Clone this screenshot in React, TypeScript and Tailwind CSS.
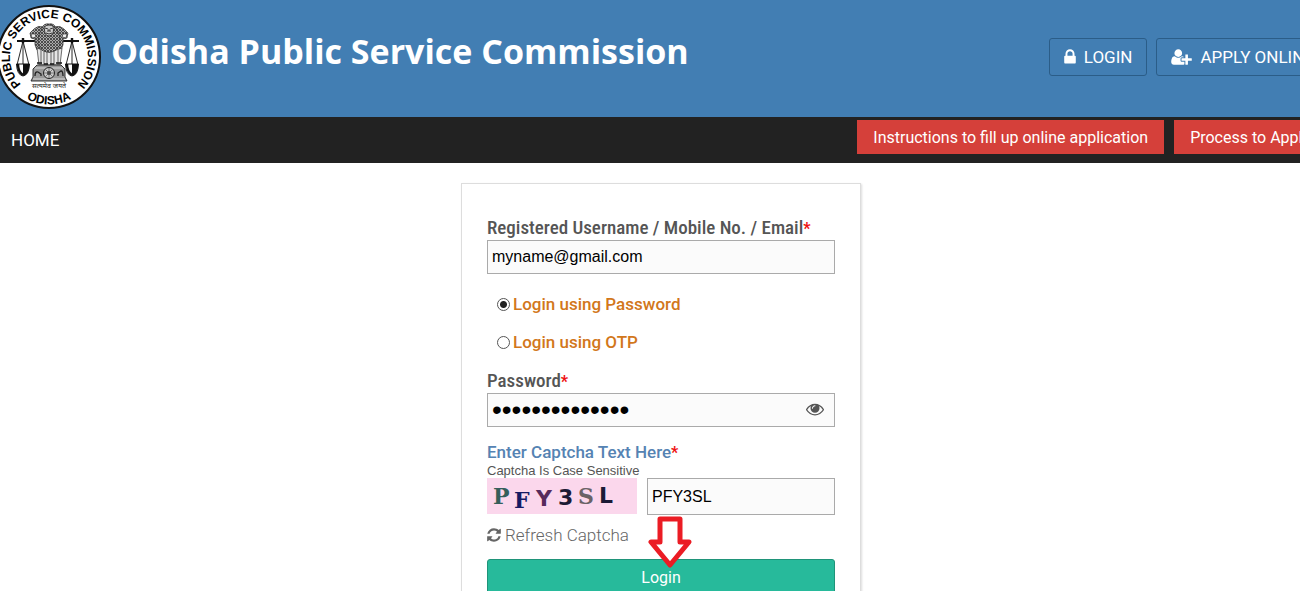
import { useState } from 'react'

const ICONS = {
  lock: {
    box: '0 0 1152 1792',
    d: 'M320 768h512v-192q0-106-75-181t-181-75-181 75-75 181v192zM1152 864v576q0 40-28 68t-68 28h-960q-40 0-68-28t-28-68v-576q0-40 28-68t68-28h32v-192q0-184 132-316t316-132 316 132 132 316v192h32q40 0 68 28t28 68z',
  },
  userPlus: {
    box: '0 0 2048 1792',
    d: 'M704 896q-159 0-271.5-112.5t-112.5-271.5 112.5-271.5 271.5-112.5 271.5 112.5 112.5 271.5-112.5 271.5-271.5 112.5zM1664 1024h352q13 0 22.5 9.5t9.5 22.5v192q0 13-9.5 22.5t-22.5 9.5h-352v352q0 13-9.5 22.5t-22.5 9.5h-192q-13 0-22.5-9.5t-9.5-22.5v-352h-352q-13 0-22.5-9.5t-9.5-22.5v-192q0-13 9.5-22.5t22.5-9.5h352v-352q0-13 9.5-22.5t22.5-9.5h192q13 0 22.5 9.5t9.5 22.5v352zM928 1248q0 52 38 90t90 38h256v238q-68 50-171 50h-874q-121 0-194-69t-73-190q0-53 3.5-103.5t14-109 26.5-108.5 43-97.5 62-81 85.5-53.5 111.5-20q19 0 39 17 79 61 154.5 91.5t164.5 30.5 164.5-30.5 154.5-91.5q20-17 39-17 132 0 217 96h-223q-52 0-90 38t-38 90v192z',
  },
  eye: {
    box: '0 0 1792 1792',
    d: 'M1664 960q-152-236-381-353 61 104 61 225 0 185-131.5 316.5t-316.5 131.5-316.5-131.5-131.5-316.5q0-121 61-225-229 117-381 353 133 205 333.5 326.5t434.5 121.5 434.5-121.5 333.5-326.5zM944 576q0-20-14-34t-34-14q-125 0-214.5 89.5t-89.5 214.5q0 20 14 34t34 14 34-14 14-34q0-86 61-147t147-61q20 0 34-14t14-34zM1792 960q0 34-20 69-140 230-376.5 368.5t-499.5 138.5-499.5-139-376.5-368q-20-35-20-69t20-69q140-229 376.5-368t499.5-139 499.5 139 376.5 368q20 35 20 69z',
  },
  refresh: {
    box: '0 0 1536 1792',
    d: 'M1511 1056q0 5-1 7-64 268-268 434.5t-478 166.5q-146 0-282.5-55t-243.5-157l-129 129q-19 19-45 19t-45-19-19-45v-448q0-26 19-45t45-19h448q26 0 45 19t19 45-19 45l-137 137q71 66 161 102t187 36q134 0 250-65t186-179q11-17 53-117 8-23 30-23h192q13 0 22.5 9.5t9.5 22.5zM1536 256v448q0 26-19 45t-45 19h-448q-26 0-45-19t-19-45 19-45l138-138q-148-137-349-137-134 0-250 65t-186 179q-11 17-53 117-8 23-30 23h-199q-13 0-22.5-9.5t-9.5-22.5v-7q65-268 270-434.5t480-166.5q146 0 284 55.5t245 156.5l130-129q19-19 45-19t45 19 19 45z',
  },
}

function Icon({ name, className }: { name: keyof typeof ICONS; className: string }) {
  return (
    <svg viewBox={ICONS[name].box} fill="currentColor" className={className} aria-hidden="true">
      <path d={ICONS[name].d} />
    </svg>
  )
}

function Scale({ x }: { x: number }) {
  return (
    <g transform={`translate(${x} 0)`}>
      <path d="M0 41L-6 65M0 41L6 65M0 41V65" fill="none" stroke="#111" strokeWidth="0.9" />
      <path d="M-6.5 64H6.5Q6 75 0 76Q-6 75-6.5 64Z" fill="#fff" stroke="#111" strokeWidth="1" />
      <path d="M0 64H6.5Q6 75 0 76Z" fill="#111" />
      <path d="M-5 64Q-5 72 0 75" fill="none" stroke="#111" strokeWidth="2.4" />
    </g>
  )
}

function Seal() {
  return (
    <svg viewBox="-3 5 104 104" className="size-[104px] shrink-0" role="img" aria-label="Odisha Public Service Commission seal">
      <defs>
        <path id="seal-top" d="M24 87A39 39 0 1 1 74 87" />
        <path id="seal-bottom" d="M4 71A47 47 0 0 0 94 71" />
        <pattern id="mane" width="3" height="3" patternUnits="userSpaceOnUse">
          <rect width="3" height="3" fill="#aaa" />
          <path d="M0 0L1.5 1.5L3 0M0 3L1.5 1.5L3 3" fill="none" stroke="#333" strokeWidth="0.8" />
        </pattern>
      </defs>
      <circle cx="49" cy="57" r="51" fill="#fff" stroke="#111" strokeWidth="2" />
      <g fill="#000" fontSize="12" fontFamily="Liberation Sans, Arial, sans-serif" fontWeight="700" textAnchor="middle">
        <text><textPath href="#seal-top" startOffset="50%">PUBLIC SERVICE COMMISSION</textPath></text>
        <text><textPath href="#seal-bottom" startOffset="50%">ODISHA</textPath></text>
      </g>
      <path d="M17 41H79" stroke="#111" strokeWidth="2.2" />
      <path d="M23 38V43M72 38V43" stroke="#111" strokeWidth="2.4" />
      <Scale x={23} />
      <Scale x={72} />

      {/* side lions */}
      <g fill="url(#mane)" stroke="#333" strokeWidth="0.7">
        <path d="M43 27Q38 25 34 29L30 33L31 38L35 39Q34 45 37 50L44 53Z" />
        <path d="M55 27Q60 25 64 29L68 33L67 38L63 39Q64 45 61 50L54 53Z" />
      </g>
      <path d="M31 34L35 34L36 37L32 38ZM67 34L63 34L62 37L66 38Z" fill="#eee" stroke="#222" strokeWidth="0.6" />
      {/* legs */}
      <path d="M37 48L39 65H60L62 48Q49 54 37 48Z" fill="#e6e6e6" stroke="#333" strokeWidth="0.7" />
      <path d="M41 50V65M44 52V65M47 52V65M51 52V65M54 52V65M58 50V65" stroke="#555" strokeWidth="0.9" />
      <path d="M37 63H42M44 64H48M50 64H54M56 63H62" stroke="#111" strokeWidth="1.6" />
      {/* middle lion */}
      <path d="M42 28Q44 23 49 24Q54 23 56 28Q61 36 60 45L55 51Q49 54 43 51L38 45Q37 36 42 28Z" fill="url(#mane)" stroke="#333" strokeWidth="0.7" />
      <path d="M44 27Q49 23 54 27L53 33Q52 36 49 36Q46 36 45 33Z" fill="#ccc" stroke="#222" strokeWidth="0.8" />
      <path d="M45 28L48 29M53 28L50 29M49 29V31M47 31H51M46 33Q49 35 52 33" fill="none" stroke="#222" strokeWidth="0.9" />
      {/* abacus */}
      <path d="M37 65H61L65 69V77L67 81H31L33 77V69Z" fill="#999" stroke="#222" strokeWidth="0.9" />
      <path d="M35 68H63M33 79H65" stroke="#ddd" strokeWidth="0.9" />
      <circle cx="49" cy="73" r="5.5" fill="#ccc" stroke="#222" strokeWidth="1" />
      <path d="M49 68V78M44 73H54M45.5 69.5L52.5 76.5M52.5 69.5L45.5 76.5" stroke="#555" strokeWidth="0.7" />
      <circle cx="49" cy="73" r="2" fill="#444" />
      <path d="M35 76Q35 71 38 72L41 74V76M58 76V73L61 71Q63 71 63 76" fill="none" stroke="#222" strokeWidth="1.3" />
      <text x="49" y="88" fontSize="7" textAnchor="middle" fill="#222" fontFamily="Noto Sans, sans-serif">सत्यमेव जयते</text>
    </svg>
  )
}

function Captcha() {
  return (
    <svg viewBox="0 0 150 36" className="h-9 w-[150px] shrink-0 bg-[#fbd7ec]" role="img" aria-label="Captcha">
      <g fontWeight="700" fontSize="22">
        <g fontFamily="DejaVu Serif, serif">
          <text x="6" y="26" fill="#355f5b">P</text>
          <text x="27" y="30" fill="#161a63">F</text>
          <text x="91" y="26" fill="#6a6266">S</text>
        </g>
        <g fontFamily="DejaVu Sans, sans-serif">
          <text x="49" y="28" fill="#572a5c">Y</text>
          <text x="71" y="27" fill="#1c1a35">3</text>
          <text x="112" y="25" fill="#1a1a35">L</text>
        </g>
      </g>
    </svg>
  )
}

const Required = () => <span className="text-base leading-none font-bold text-[#e11]">*</span>

const fieldClass =
  'w-full rounded-none border border-[#aaa] bg-[#fbfbfb] px-1 font-["Liberation_Sans",Arial,sans-serif] text-black outline-none'

const radioClass =
  'size-[13px] appearance-none rounded-full border border-[#555] bg-white checked:bg-[radial-gradient(circle,#222_3px,white_4px)]'

export default function App() {
  const [method, setMethod] = useState('password')
  const [visible, setVisible] = useState(false)

  return (
    <div className="min-h-screen overflow-x-clip bg-white font-[Roboto,sans-serif] text-[17px] leading-6">
      <header className="flex h-[117px] items-start justify-between bg-[#427eb3] text-white">
        <div className="-ml-[3px] flex items-start gap-[10px] pt-[5px]">
          <Seal />
          <h1 className="pt-6 font-['Trebuchet_MS','Open_Sans',sans-serif] text-[34px] leading-[44px] font-bold whitespace-nowrap">
            Odisha Public Service Commission
          </h1>
        </div>
        <div className="-mr-[29px] flex shrink-0 gap-[9px] pt-[38px]">
          <a href="#login" className="flex h-[38px] items-center gap-2 rounded-[3px] border border-[#2b5d88] px-[14px]">
            <Icon name="lock" className="h-[18px] w-3" />
            LOGIN
          </a>
          <a href="#apply" className="flex h-[38px] items-center gap-2 rounded-[3px] border border-[#2b5d88] px-[14px] whitespace-nowrap">
            <Icon name="userPlus" className="h-[18px] w-[21px]" />
            APPLY ONLINE
          </a>
        </div>
      </header>

      <nav className="flex h-[46px] items-start justify-between bg-[#222] text-white">
        <a href="#home" className="px-[11px] pt-[11px]">HOME</a>
        <div className="-mr-[26px] flex shrink-0 gap-[10px] pt-[3px] text-base whitespace-nowrap">
          <a href="#instructions" className="bg-[#d5403a] px-4 pt-[6px] pb-1">Instructions to fill up online application</a>
          <a href="#process" className="bg-[#d5403a] px-4 pt-[6px] pb-1">Process to Apply</a>
        </div>
      </nav>

      <main className="flex justify-center pt-5 pl-[22px]">
        <form
          className="w-full max-w-[400px] border border-[#ddd] px-[25px] pt-8 pb-8 text-[#555] shadow-[1px_1px_2px_#ddd]"
          onSubmit={(e) => e.preventDefault()}
        >
          <label htmlFor="username" className="block font-['Roboto_Condensed',Roboto,sans-serif] text-[19px] leading-6 font-medium">
            Registered Username / Mobile No. / Email<Required />
          </label>
          <input id="username" type="text" defaultValue="myname@gmail.com" className={`h-[34px] text-base ${fieldClass}`} />

          <div className="flex flex-col gap-[14px] pt-[18px] pl-[10px] font-medium text-[#d2771b]">
            <label className="flex items-center gap-[3px]">
              <input type="radio" name="method" className={radioClass} checked={method === 'password'} onChange={() => setMethod('password')} />
              Login using Password
            </label>
            <label className="flex items-center gap-[3px]">
              <input type="radio" name="method" className={radioClass} checked={method === 'otp'} onChange={() => setMethod('otp')} />
              Login using OTP
            </label>
          </div>

          <label htmlFor="password" className="block pt-[15px] font-['Roboto_Condensed',Roboto,sans-serif] text-[19px] leading-6 font-medium">
            Password<Required />
          </label>
          <div className="relative">
            <input
              id="password"
              type={visible ? 'text' : 'password'}
              defaultValue="abcdefghijklmn"
              className={`h-[34px] ${visible ? 'text-base' : 'text-[28px]'} ${fieldClass}`}
            />
            <button type="button" aria-label="Show password" className="absolute top-[7px] right-[11px]" onClick={() => setVisible(!visible)}>
              <Icon name="eye" className="size-[18px]" />
            </button>
          </div>

          <label htmlFor="captcha" className="block pt-[13px] font-medium text-[#5583b3]">
            Enter Captcha Text Here<Required />
          </label>
          <p className="font-['Liberation_Sans',Arial,sans-serif] text-[13px] leading-[14px]">Captcha Is Case Sensitive</p>
          <div className="flex gap-[10px]">
            <Captcha />
            <input id="captcha" type="text" defaultValue="PFY3SL" className={`h-[37px] min-w-0 text-base ${fieldClass}`} />
          </div>

          <button type="button" className="flex items-center gap-1 pt-2 font-light text-[#666]">
            <Icon name="refresh" className="h-4 w-[14px]" />
            Refresh Captcha
          </button>

          <div className="relative pt-3">
            <button type="submit" className="h-[38px] w-full rounded-[3px] border border-[#1f9479] bg-[#27ba9b] text-base text-white">
              Login
            </button>
            <svg viewBox="0 0 44 54" className="absolute -top-[31px] left-[161px] h-[54px] w-11" aria-hidden="true">
              <path d="M12 3H32V26H41L22 49L3 26H12Z" fill="#fff" stroke="#eb1c24" strokeWidth="5" strokeLinejoin="round" />
            </svg>
          </div>
        </form>
      </main>
    </div>
  )
}
